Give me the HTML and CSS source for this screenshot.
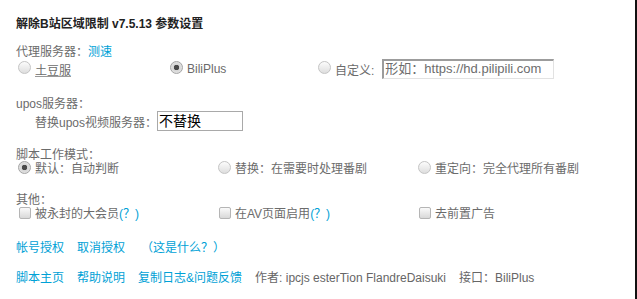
FILE: index.html
```html
<!DOCTYPE html>
<html lang="zh-CN">
<head>
<meta charset="utf-8">
<title>解除B站区域限制 参数设置</title>
<link rel="stylesheet" href="styles.css">
</head>
<body>
<div class="panel">
  <div class="title">解除B站区域限制 v7.5.13 参数设置</div>

  <div class="section s-proxy">
    <div class="label">代理服务器：<a class="link">测速</a></div>
    <div class="row row-proxy">
      <label class="opt"><span class="radio"></span><span class="u">土豆服</span></label>
      <label class="opt"><span class="radio checked"></span>BiliPlus</label>
      <label class="opt"><span class="radio"></span>自定义:<span class="input custom">形如：https://hd.pilipili.com</span></label>
    </div>
  </div>

  <div class="section s-upos">
    <div class="label">upos服务器：</div>
    <div class="row row-upos">替换upos视频服务器：<span class="input select">不替换</span></div>
  </div>

  <div class="section s-mode">
    <div class="label">脚本工作模式：</div>
    <div class="row row-cols">
      <label class="opt"><span class="radio checked"></span>默认：自动判断</label>
      <label class="opt"><span class="radio"></span>替换：在需要时处理番剧</label>
      <label class="opt"><span class="radio"></span>重定向：完全代理所有番剧</label>
    </div>
  </div>

  <div class="section s-other">
    <div class="label">其他：</div>
    <div class="row row-cols">
      <label class="opt"><span class="check"></span>被永封的大会员<a class="link">(？)</a></label>
      <label class="opt"><span class="check"></span>在AV页面启用<a class="link">(？)</a></label>
      <label class="opt"><span class="check"></span>去前置广告</label>
    </div>
  </div>

  <div class="links">
    <a class="link">帐号授权</a>
    <a class="link">取消授权</a>
    <a class="link what">（这是什么？）</a>
  </div>

  <div class="links footer">
    <a class="link">脚本主页</a>
    <a class="link">帮助说明</a>
    <a class="link">复制日志&amp;问题反馈</a>
    <span>作者: ipcjs esterTion FlandreDaisuki</span>
    <span>接口：BiliPlus</span>
  </div>
</div>
</body>
</html>
```

FILE: styles.css
```css
html, body {
  margin: 0;
  padding: 0;
  background: #fff;
}
body {
  font-family: "Liberation Sans", "Noto Sans CJK SC", Arial, sans-serif;
  font-size: 12px;
  color: #6b6b6b;
}
.panel {
  box-sizing: border-box;
  width: 637px;
  height: 299px;
  padding: 16px 0 0 16px;
  border-right: 2px solid #111;
}
.title {
  font-weight: bold;
  color: #222;
  line-height: 16px;
}
.label {
  line-height: 14px;
}
.section.s-proxy { margin-top: 13px; }
.section.s-upos { margin-top: 18px; }
.section.s-mode { margin-top: 17px; }
.section.s-other { margin-top: 17px; }

.row {
  display: grid;
  align-items: center;
}
.row-proxy {
  grid-template-columns: 152px 148px auto;
  height: 20px;
  padding-left: 2px;
}
.row-cols {
  grid-template-columns: 200px 200px auto;
  height: 14px;
  line-height: 14px;
  padding-left: 2px;
}
.row-upos {
  display: flex;
  height: 20px;
  padding-left: 19px;
}
.opt {
  display: flex;
  align-items: center;
  white-space: nowrap;
}
.radio {
  box-sizing: border-box;
  width: 13px;
  height: 13px;
  border-radius: 50%;
  border: 1px solid #c4c4c4;
  background: linear-gradient(#fcfcfc, #dedede);
  margin: -3px 4px 0 0;
  flex: none;
}
.radio.checked {
  background: radial-gradient(circle, #4a4a4a 0 2.5px, #d6d6d6 3px, #ebebeb 100%);
  border-color: #a5a5a5;
}
.check {
  box-sizing: border-box;
  width: 12px;
  height: 12px;
  border-radius: 2px;
  border: 1px solid #b5b5b5;
  background: linear-gradient(#fafafa, #d8d8d8);
  margin: -3px 4px 0 1px;
  flex: none;
}
.u {
  text-decoration: underline;
  text-decoration-color: #999;
}
.input {
  box-sizing: border-box;
  display: inline-block;
  height: 20px;
  line-height: 16px;
  white-space: nowrap;
  overflow: hidden;
}
.input.custom {
  width: 172px;
  margin-left: 8px;
  border-style: solid;
  border-width: 2px 1px 1px 2px;
  border-color: #9c9c9c #e2e2e2 #e2e2e2 #9c9c9c;
  font-size: 13px;
  color: #6d6d6d;
  padding-left: 1px;
}
.input.select {
  width: 86px;
  border: 1px solid #a9a9a9;
  font-size: 14px;
  line-height: 18px;
  color: #000;
  padding-left: 1px;
}
.link {
  color: #00a1d6;
  text-decoration: none;
}
.links {
  display: flex;
  gap: 13px;
  line-height: 16px;
  margin-top: 19px;
}
.links .what {
  margin-left: 3px;
}
.links.footer {
  margin-top: 14px;
}
.footer span {
  color: #666;
}
```
